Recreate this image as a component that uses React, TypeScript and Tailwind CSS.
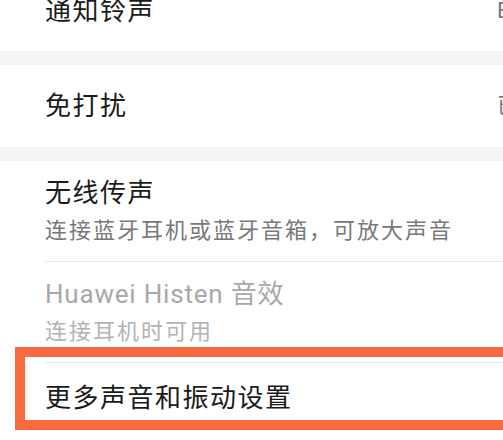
import React from 'react';

interface Item {
  title: string;
  subtitle?: string;
  disabled?: boolean;
  latin?: boolean;
}

const items: Item[] = [
  { title: '无线传声', subtitle: '连接蓝牙耳机或蓝牙音箱，可放大声音' },
  { title: 'Huawei Histen 音效', subtitle: '连接耳机时可用', disabled: true, latin: true },
];

const font = 'font-["Roboto","Noto_Sans_CJK_SC",sans-serif]';

const SimpleRow: React.FC<{ title: string; value: string; className: string }> = ({ title, value, className }) => (
  <div className={`flex bg-white pl-[45px] ${className}`}>
    <span className="flex-1 text-[26px] leading-8 tracking-[1.5px] text-[#1a1a1a] whitespace-nowrap">{title}</span>
    <span className="w-[6px] text-[22px] leading-8 text-[#777] whitespace-nowrap">{value}</span>
  </div>
);

const App: React.FC = () => {
  return (
    <div className={`relative w-[503px] h-[440px] overflow-hidden bg-white ${font}`}>
      {/* top rows (first is scrolled partly out of view) */}
      <SimpleRow title="通知铃声" value="Bongo" className="h-[56px] items-start -mt-[5px]" />
      <div className="h-[14px] bg-[#f5f5f5]" />
      <SimpleRow title="免打扰" value="已关闭" className="h-[82px] items-center" />
      <div className="h-[14px] bg-[#f5f5f5]" />

      <div className="bg-white">
        {items.map((item) => (
          <div key={item.title} className="pl-[45px]">
            <div className="pt-4 pb-4">
              <div
                className={`text-[26px] leading-8 whitespace-nowrap ${
                  item.latin ? 'tracking-[0.8px]' : 'tracking-[1.5px]'
                } ${item.disabled ? 'text-[#a8a8a8]' : 'text-[#1a1a1a]'}`}
              >
                {item.title}
              </div>
              <div
                className={`mt-2 text-[22px] leading-7 tracking-[2px] whitespace-nowrap ${
                  item.disabled ? 'text-[#b3b3b3]' : 'text-[#787878]'
                }`}
              >
                {item.subtitle}
              </div>
            </div>
            <div className="h-px bg-[#e8e8e8]" />
          </div>
        ))}
        <div className="pl-[45px] pt-[19px]">
          <div className="text-[26px] leading-8 tracking-[1.5px] text-[#1a1a1a] whitespace-nowrap">更多声音和振动设置</div>
        </div>
      </div>

      {/* highlight annotation */}
      <div className="absolute left-[15px] top-[347px] w-[520px] h-[83px] border-[10px] border-[#f96b3f]" />
    </div>
  );
};

export default App;
